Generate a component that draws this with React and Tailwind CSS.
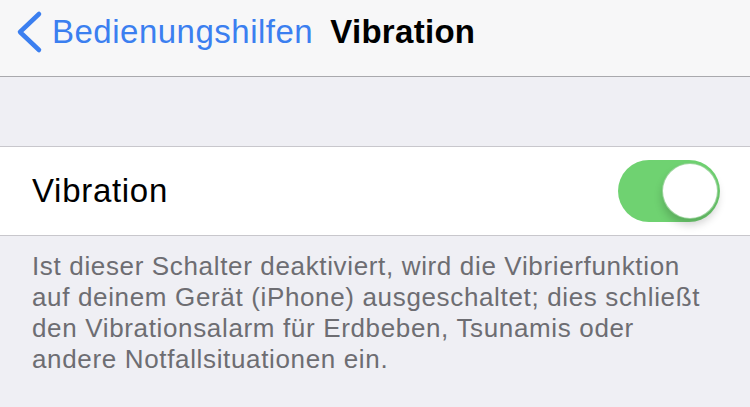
const Chevron = () => (
  <svg width="28" height="44" viewBox="0 0 28 44" fill="none" className="ml-[15px] mt-[-2px] shrink-0">
    <path d="M24 4 L5 22 L24 40" stroke="#3b7ff0" strokeWidth="4.5" strokeLinecap="round" strokeLinejoin="round" />
  </svg>
)

const Toggle = ({ on }) => (
  <div className={`relative w-[102px] h-[62px] rounded-full ${on ? 'bg-[#6fd271]' : 'bg-[#e5e5ea]'}`}>
    <div className="absolute right-[2px] top-[3px] w-[56px] h-[56px] rounded-full bg-white border border-[#5bb95d]/60 shadow-[0_6px_8px_rgba(0,0,0,0.18)]" />
  </div>
)

const App = () => {
  const footer = [
    'Ist dieser Schalter deaktiviert, wird die Vibrierfunktion',
    'auf deinem Gerät (iPhone) ausgeschaltet; dies schließt',
    'den Vibrationsalarm für Erdbeben, Tsunamis oder',
    'andere Notfallsituationen ein.'
  ]

  return (
    <div className="w-[750px] h-[407px] overflow-hidden bg-[#efeff4] font-['Liberation_Sans',Arial,sans-serif]">
      {/* nav bar */}
      <div className="h-[77px] bg-[#f7f7f8] border-b border-[#a9a9ad] flex items-start pt-[12px]">
        <Chevron />
        <span className="ml-[9px] text-[33px] leading-[40px] tracking-[0.5px] text-[#3b7ff0]">Bedienungshilfen</span>
        <span className="ml-[17px] text-[33px] leading-[40px] tracking-[0.3px] font-bold text-black">Vibration</span>
      </div>

      <div className="h-[69px]" />

      {/* row */}
      <div className="h-[90px] bg-white border-y border-[#c8c7cc] flex items-center justify-between pl-[32px] pr-[30px]">
        <span className="text-[33px] tracking-[0.7px] text-black">Vibration</span>
        <Toggle on />
      </div>

      {/* footer */}
      <div className="pl-[32px] pt-[15px] text-[26px] leading-[31px] tracking-[0.65px] text-[#6d6d72] whitespace-nowrap">
        {footer.map((line) => (
          <div key={line}>{line}</div>
        ))}
      </div>
    </div>
  )
}

export default App
